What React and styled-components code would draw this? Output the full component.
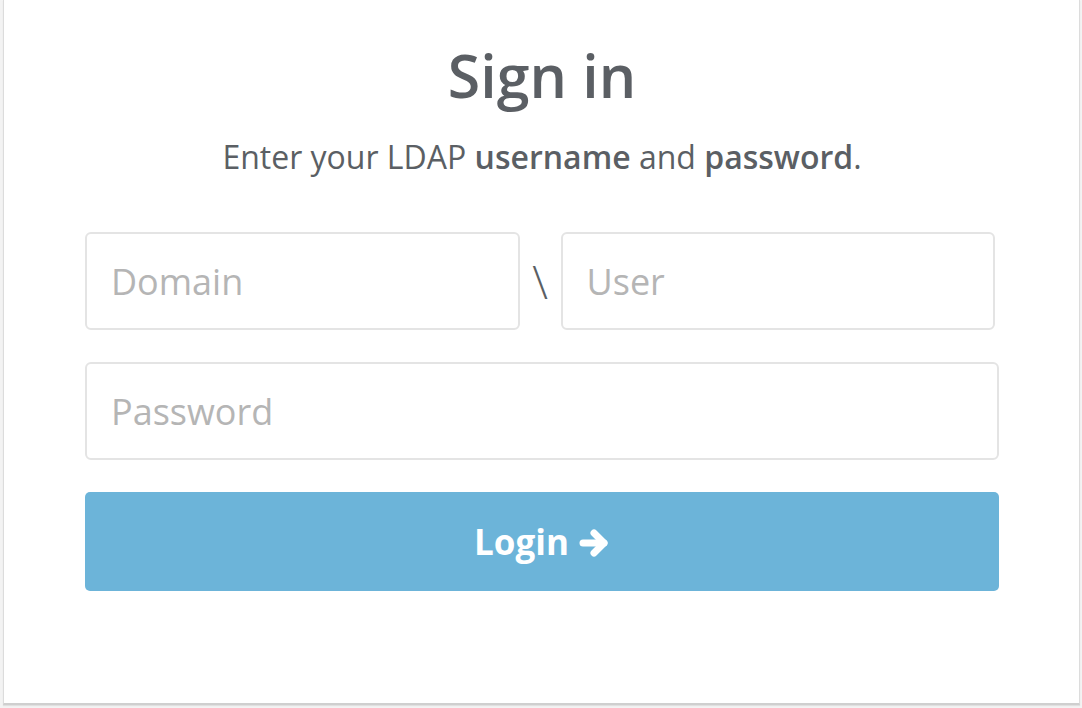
import React from "react";
import styled, { createGlobalStyle } from "styled-components";

const Global = createGlobalStyle`
  html, body { margin: 0; padding: 0; background: #ffffff; }
  body { font-family: "Open Sans", "Noto Sans", sans-serif; }
  * { box-sizing: border-box; }
`;

const Page = styled.div`
  width: 1082px;
  height: 708px;
  padding: 0 2px 3px 3px;
  background: #f3f3f3;
  display: flex;
`;

const Card = styled.div`
  flex: 1;
  background: #ffffff;
  border: 1px solid #dcdcdc;
  border-top: none;
  border-bottom: 2px solid #cfcfcf;
  box-shadow: 0 1px 1px rgba(0,0,0,0.08);
  padding: 35px 80px 0 81px;
  display: flex;
  flex-direction: column;
  align-items: stretch;
`;

const Title = styled.h1`
  margin: 0;
  text-align: center;
  font-size: 59px;
  font-weight: 600;
  line-height: 80px;
  color: #5b5f64;
`;

const Subtitle = styled.p`
  margin: 20px 0 0;
  text-align: center;
  font-size: 32px;
  line-height: 44px;
  color: #5b5f64;
  b { font-weight: 600; }
`;

const Form = styled.form`
  margin-top: 53px;
  display: flex;
  flex-direction: column;
  gap: 32px;
`;

const CredRow = styled.div`
  display: grid;
  grid-template-columns: 1fr 41px 1fr;
  margin-right: 4px;
  align-items: center;
`;

const Sep = styled.span`
  text-align: center;
  font-size: 46px;
  font-weight: 300;
  color: #5b5f64;
  line-height: 98px;
`;

const Input = styled.input`
  width: 100%;
  height: 98px;
  border: 2px solid #e4e4e4;
  border-radius: 6px;
  padding: 0 24px;
  font-family: "Open Sans", sans-serif;
  font-size: 36px;
  color: #555;
  background: #fff;
  outline: none;
  &::placeholder { color: #b5b5b5; }
`;

const LoginButton = styled.button`
  height: 99px;
  width: 100%;
  border: none;
  border-radius: 5px;
  background: #6cb4d9;
  color: #ffffff;
  font-family: "Open Sans", sans-serif;
  font-size: 35px;
  font-weight: 700;
  display: flex;
  align-items: center;
  justify-content: center;
  gap: 10px;
`;

const ArrowIcon = styled.svg`
  width: 31px;
  height: 32px;
  margin-top: 3px;
`;

function Arrow() {
  return (
    <ArrowIcon viewBox="0 0 31 32" fill="none" stroke="#fff" strokeLinecap="round" strokeLinejoin="round">
      <path d="M4 16 H25" strokeWidth="7" />
      <path d="M15 6 L25 16 L15 26" strokeWidth="7" />
    </ArrowIcon>
  );
}

export default function App() {
  return (
    <>
      <Global />
      <Page>
        <Card>
          <Title>Sign in</Title>
          <Subtitle>
            Enter your LDAP <b>username</b> and <b>password</b>.
          </Subtitle>
          <Form onSubmit={(e) => e.preventDefault()}>
            <CredRow>
              <Input placeholder="Domain" />
              <Sep>\</Sep>
              <Input placeholder="User" />
            </CredRow>
            <Input type="password" placeholder="Password" />
            <LoginButton type="submit">
              Login <Arrow />
            </LoginButton>
          </Form>
        </Card>
      </Page>
    </>
  );
}
